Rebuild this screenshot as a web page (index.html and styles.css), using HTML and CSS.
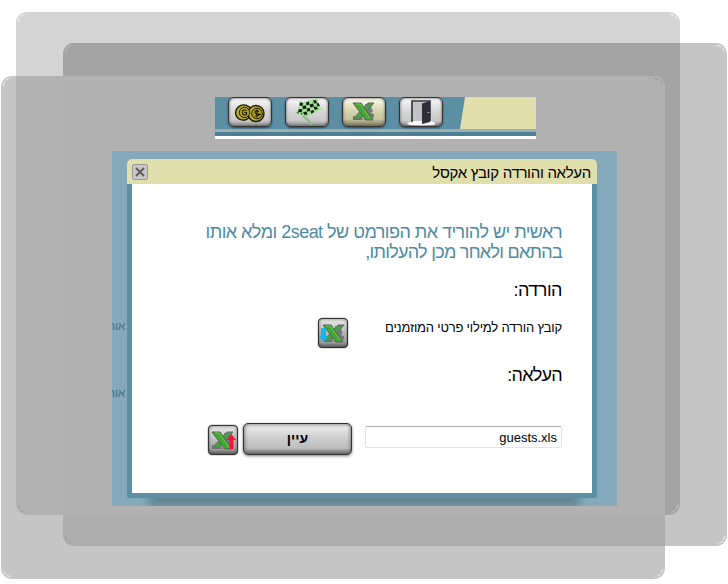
FILE: index.html
```
<!DOCTYPE html>
<html lang="he">
<head>
<meta charset="utf-8">
<title>2seat</title>
<link rel="stylesheet" href="styles.css">
</head>
<body>
<svg class="sheets" width="728" height="584" viewBox="0 0 728 584" aria-hidden="true">
  <defs>
    <clipPath id="a"><rect x="16" y="12" width="664" height="503" rx="11"/></clipPath>
    <clipPath id="c"><rect x="1" y="76" width="664" height="503" rx="11"/></clipPath>
  </defs>
  <rect x="16" y="12" width="664" height="503" rx="11" fill="#d4d4d4"/>
  <rect x="63" y="43" width="664" height="503" rx="11" fill="#c5c5c5"/>
  <g clip-path="url(#a)"><rect x="63" y="43" width="664" height="503" rx="11" fill="#a4a4a4"/></g>
  <g fill="none" stroke-dasharray="4 1.500">
    <path d="M18.500 22Q19 15 26 14.500M670 14.500Q677 15 677.500 22M717 45.500Q724 46 724.500 53M724.500 536Q724 543 717 543.500" stroke="#f6f6f6"/>
    <path d="M65.500 53Q66 46 73 45.500M677.500 505Q677 512 670 512.500" stroke="#c4c4c4"/>
  </g>
  <rect x="1" y="76" width="664" height="503" rx="11" fill="#c5c5c5"/>
  <g clip-path="url(#c)">
    <rect x="63" y="43" width="664" height="503" rx="11" fill="#adadad"/>
    <rect x="16" y="12" width="664" height="503" rx="11" fill="#b3b3b3"/>
    <g clip-path="url(#a)"><rect x="63" y="43" width="664" height="503" rx="11" fill="#b1b1b1"/></g>
  </g>
  <g fill="none" stroke-dasharray="4 1.500">
    <path d="M3.500 86Q4 79 11 78.500M662.500 569Q662 576 655 576.500M11 576.500Q4 576 3.500 569" stroke="#f4f4f4"/>
    <path d="M655 78.500Q662 79 662.500 86M18.500 505Q19 512 26 512.500M65.500 536Q66 543 73 543.500" stroke="#989898"/>
  </g>
</svg>

<main class="page">
  <nav class="toolbar">
    <span class="tool"><svg width="38" height="27" viewBox="0 0 38 27"><g fill="#b9ae2a" stroke="#1d1a00" stroke-width="1.400"><ellipse cx="12.500" cy="13.500" rx="8" ry="7.500" transform="rotate(-25 12.500 13.500)"/><ellipse cx="25" cy="14.500" rx="8" ry="8"/></g><g fill="#a99e22" stroke="#1d1a00"><circle cx="13.500" cy="13.500" r="5.200"/><circle cx="26" cy="14.500" r="5.300"/></g><path d="M15.500 11.500q-4-1.500-4 2t4 2v-2h-2M28 12.500q-4-1.500-4 .5t4 2-4 2M26 10.500v8" fill="none" stroke="#1d1a00" stroke-width="1.100"/></svg></span>
    <span class="tool"><svg width="38" height="27" viewBox="0 0 38 27"><path d="M11 2q6 2 10-1l9-1q0 6 4 11-5 0-8 2.500T19 18q-5-3-12-3 5-5 4-13z" fill="#a5e39c"/><g fill="#12200f"><path d="M12 3.500l3 .5-.5 3-3-.5zM18 3.500l3-1 .5 3-3 1zM25 1.500l3-.5 1 3-3 .5zM14.500 7l3.500-.5.5 3-3.500.7zM21.500 5.500l3.500-1 1 3-3.500 1zM28.500 4.500l2-.5 1.500 3-2.500.5zM11 10l3.500.2-1 3-3.500-.2zM18.500 9.800l3-1 1 3-3 1zM25.500 8l3-.6 1.500 2.600-3 1zM15 13l3.500-.5 1 3-3 .5zM22.500 12l3-1 .8 2-3 1.800zM8.500 13.500l2-.5v2zM12.500 14.500l2-.5-.5 2z"/></g><path d="M15 17q5 3 8.500 9" fill="none" stroke="#8dbd83" stroke-width="2.400"/></svg></span>
    <span class="tool tool-active"><svg width="24" height="20" viewBox="0 0 24 20"><use href="#excel"/></svg></span>
    <span class="tool"><svg width="38" height="27" viewBox="0 0 38 27"><path d="M5 24l5-2h19l5 2-2 1 1 1-13 .5L7 26z" fill="#fafafa"/><path d="M10 3h17v19H10z" fill="#c3c3c5"/><path d="M10 23V2h18v20" fill="none" stroke="#303036" stroke-width="1.600"/><path d="M20 4.500L28 2v21l-8 2z" fill="#2e2f36"/><path d="M25.500 13.500h2" stroke="#aaa"/></svg></span>
    <i class="toolbar-tab"></i>
  </nav>

  <section class="stage">
    <span class="behind behind-top" dir="rtl">אור</span>
    <span class="behind behind-low" dir="rtl">אור</span>
    <div class="dialog">
      <header class="dialog-head">
        <span class="close"><svg width="10" height="10" viewBox="0 0 10 10"><path d="M1 1l8 8M9 1L1 9" stroke="#5d5d5d" stroke-width="2"/></svg></span>
        <h1 dir="rtl">העלאה והורדה קובץ אקסל</h1>
      </header>
      <div class="dialog-body" dir="rtl">
        <p class="intro"><span class="line line-a">ראשית יש להוריד את הפורמט של 2seat ומלא אותו</span><span class="line line-b">בהתאם ולאחר מכן להעלותו,</span></p>
        <h2 class="download-title">הורדה:</h2>
        <div class="row download">
          <span class="label">קובץ הורדה למילוי פרטי המוזמנים</span>
          <span class="icon-btn"><svg width="32" height="32" viewBox="0 0 32 32"><use href="#excel" x="5" y="7"/><path d="M4 11h5v8h2l-4.500 6L2 19h2z" fill="#13b5f2"/></svg></span>
        </div>
        <h2 class="upload-title">העלאה:</h2>
        <div class="row upload">
          <span class="field" dir="ltr">guests.xls</span>
          <span class="browse"><span>עיין</span></span>
          <span class="icon-btn"><svg width="32" height="32" viewBox="0 0 32 32"><use href="#excel" x="4" y="7"/><path d="M22.500 25v-9H20l4.500-6 4.500 6h-2.500v9z" fill="#f9123c"/></svg></span>
        </div>
      </div>
    </div>
    <i class="shade"></i>
  </section>
</main>

<svg class="symbols" width="0" height="0"><defs><g id="excel"><path d="M13 2h8l-2 3 2 4-2 2 3 1v3l-2 3h-8zM1 14h9l1 4H1z" fill="#77797a"/><path d="M16 1h6L8 17H1z" fill="#4c9c4f" stroke="#666b66" stroke-width="1"/><path d="M1 1h8l12 17h-7z" fill="#45a733" stroke="#576257" stroke-width="1"/><path d="M4 2h4l10 14" fill="none" stroke="#6cca4a"/></g></defs></svg>
</body>
</html>
```

FILE: styles.css
```
* { box-sizing: border-box; }
body {
  margin: 0;
  width: 728px;
  height: 584px;
  overflow: hidden;
  background: #fff;
  font-family: "Liberation Sans", Arial, sans-serif;
  color: #000;
}
.sheets { position: absolute; inset: 0; }
.symbols { position: absolute; }
.page { position: relative; padding: 97px 111px 0 112px; }

.toolbar {
  display: flex;
  width: 321px;
  height: 42px;
  margin-left: 103px;
  padding-left: 13px;
  gap: 13px;
  background: linear-gradient(#5c8fa4 0 32px, #9bafb5 32px 35px, #4c7f94 35px 39px, #fff 39px);
}
.tool {
  display: flex;
  flex: none;
  align-items: center;
  justify-content: center;
  width: 44px;
  height: 30px;
  border: 1px solid #333;
  border-radius: 6px;
  background: linear-gradient(#fafafa, #d8d8d8 45%, #cacaca 80%, #888);
  box-shadow: inset 0 0 3px #555, 0 1px 2px #304b57;
}
.tool-active { background: linear-gradient(#fffff0, #d7d5ae 45%, #c8c69e 75%, #77755a); }
.toolbar-tab {
  width: 76px;
  height: 32px;
  margin-left: auto;
  background: #e1dfac;
  clip-path: polygon(5px 0, 100% 0, 100% 100%, 0 100%);
}

.stage {
  position: relative;
  height: 355px;
  margin-top: 12px;
  padding: 8px 20px 0 15px;
  overflow: hidden;
  background: #84a9bb;
}
.behind {
  position: absolute;
  left: -6px;
  width: 19px;
  font-size: 12px;
  line-height: 14px;
  letter-spacing: -0.3px;
  color: #4a7187;
}
.behind-top { top: 168px; }
.behind-low { top: 235px; }
.shade {
  position: absolute;
  left: 37px;
  top: 345px;
  width: 430px;
  height: 8px;
  background: #52727d;
  filter: blur(4px);
}
.dialog {
  position: relative;
  z-index: 1;
  height: 339px;
  border-radius: 5px 5px 2px 2px;
  background: #5b8fa3;
  overflow: hidden;
}
.dialog-head {
  display: flex;
  justify-content: space-between;
  align-items: center;
  height: 25px;
  padding: 0 6px 0 5px;
  background: #e1dfac;
}
.dialog-head h1 {
  margin: 3px 0 0;
  font-size: 15px;
  line-height: 20px;
  font-weight: normal;
  letter-spacing: -0.3px;
}
.close {
  display: flex;
  align-items: center;
  justify-content: center;
  width: 16px;
  height: 16px;
  margin-top: 1px;
  border: 1px solid #999;
  border-radius: 2px;
  background: #c8c8c8;
}
.dialog-body {
  height: 309px;
  margin: 0 5px;
  padding: 38px 30px 0 0;
  background: #fff;
}
.intro {
  margin: 0;
  font-size: 18px;
  line-height: 20px;
  color: #4d8ba4;
}
.line { display: block; white-space: nowrap; }
.line-a { letter-spacing: -0.52px; }
.line-b { letter-spacing: -0.72px; }
h2 { margin: 0; font-size: 18px; line-height: 20px; font-weight: normal; }
.download-title { margin-top: 18px; letter-spacing: -0.5px; }
.row { display: flex; }
.download { justify-content: flex-start; height: 32px; margin-top: 17px; }
.label { width: 213px; padding-top: 3px; font-size: 13px; line-height: 16px; letter-spacing: -0.2px; white-space: nowrap; }
.icon-btn {
  display: flex;
  flex: none;
  width: 32px;
  height: 32px;
  border: 1px solid #ddd;
  border-radius: 5px;
  background: linear-gradient(#eee, #bebebe 50%, #a4a4a4 80%, #555);
  box-shadow: inset 0 0 0 1px #333, inset 0 0 4px #444;
}
.icon-btn svg { flex: none; margin: -1px; }
.upload-title { margin-top: 16px; letter-spacing: -0.75px; }
.upload { align-items: flex-start; margin-top: 37px; }
.field {
  width: 197px;
  height: 22px;
  margin-top: 4px;
  padding-right: 4px;
  border: 1px solid #e2e3ea;
  border-top-color: #abadb3;
  border-radius: 2px;
  font-size: 13px;
  line-height: 21px;
  text-align: right;
}
.browse {
  display: flex;
  justify-content: center;
  width: 109px;
  height: 32px;
  margin: 1px 13px 0 4px;
  border: 1px solid #333;
  border-radius: 5px;
  background: linear-gradient(#f3f3f3, #cfcfcf 45%, #bdbdbd 80%, #707070);
  box-shadow: inset 0 0 4px #555, 0 1px 3px #777;
  font-size: 14px;
  font-weight: bold;
  line-height: 29px;
}
.upload .icon-btn { margin-top: 2px; }
```
